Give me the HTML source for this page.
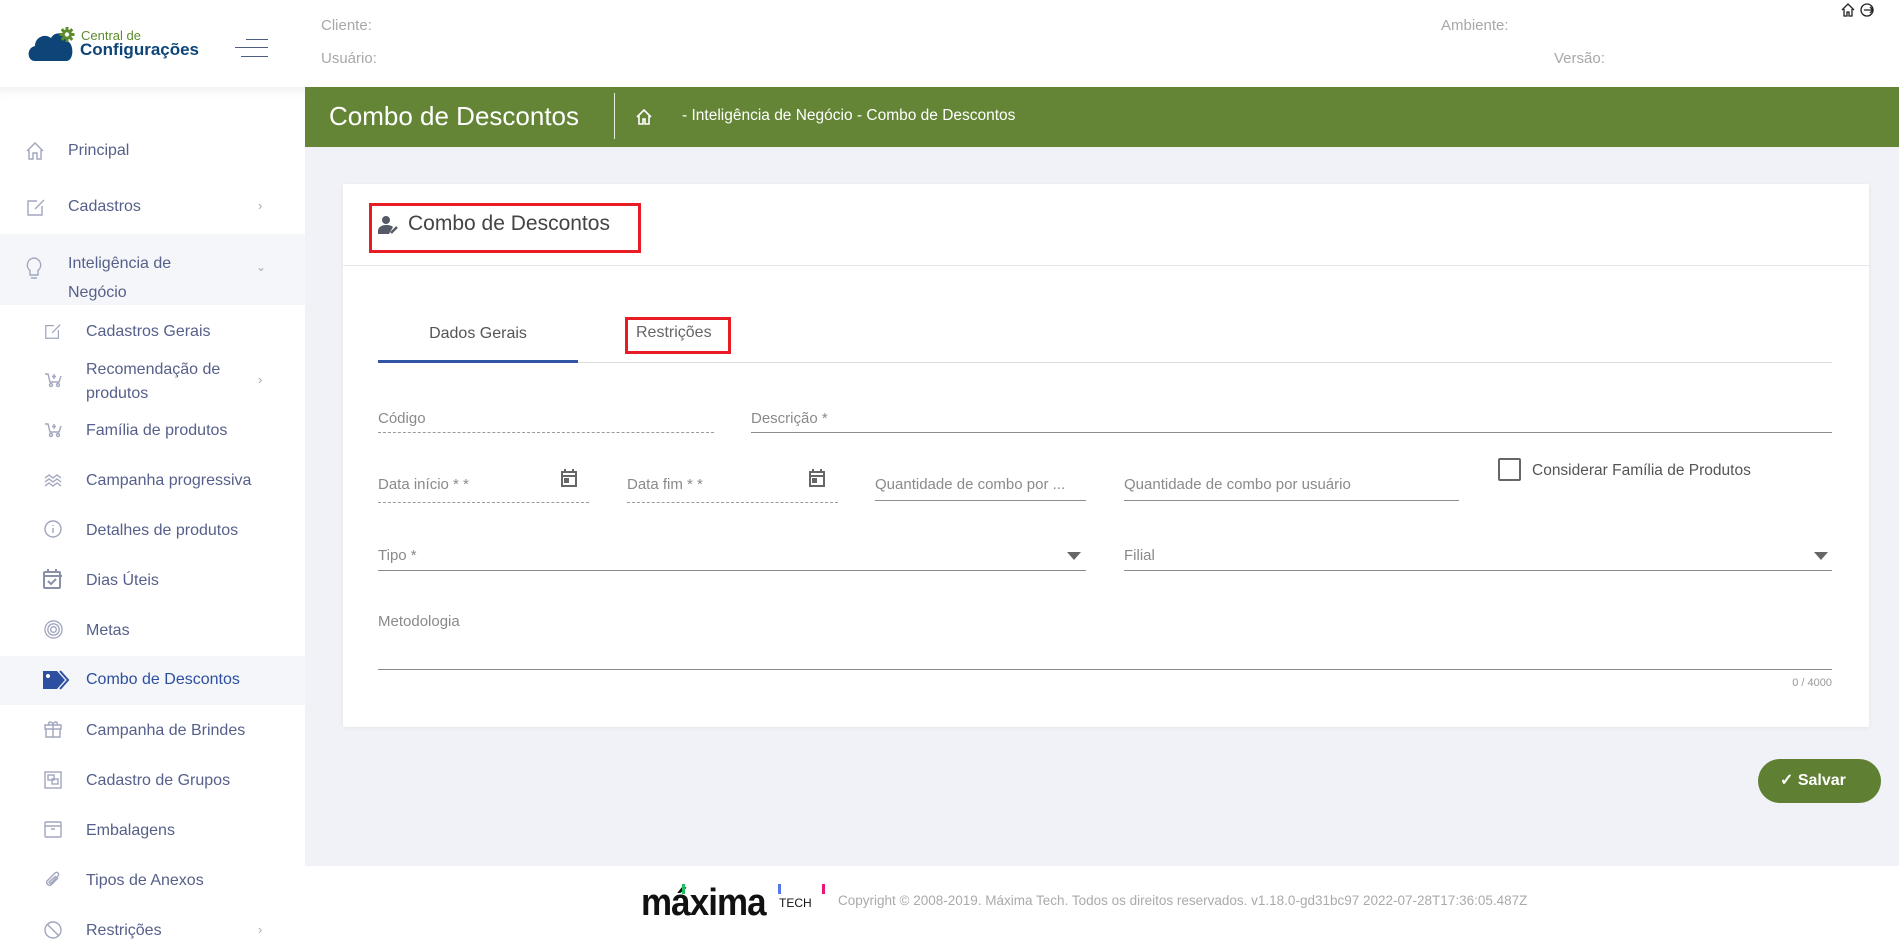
<!DOCTYPE html>
<html><head><meta charset="utf-8"><style>
*{margin:0;padding:0;box-sizing:border-box}
body{width:1899px;height:941px;overflow:hidden;background:#f0f2f7;font-family:"Liberation Sans",sans-serif;position:relative}
.a{position:absolute;white-space:nowrap}
.hdr{position:absolute;left:0;top:0;width:1899px;height:87px;background:#fff}
.side{position:absolute;left:0;top:87px;width:305px;height:854px;background:#fff;box-shadow:inset 0 12px 12px -10px rgba(0,0,0,.08)}
.si{position:absolute;font-size:16px;color:#56608a}
.ic{position:absolute;stroke:#a0a6be;fill:none;stroke-width:1.4}
.lbl{position:absolute;font-size:15px;color:#8a8a8a;white-space:nowrap}
.ln{position:absolute;height:0;border-bottom:1px solid #8c8c8c}
.dl{position:absolute;height:0;border-bottom:1px dashed #9a9a9a}
</style></head><body>
<div class="hdr"></div>
<!-- logo -->
<svg class="a" style="left:28px;top:26px" width="50" height="36" viewBox="0 0 50 36">
<path d="M7 35 C-1 35 -2 22 7 20 C7 11 17 7 23 12 C27 5 37 6 38 15 C46 15 47 35 38 35 Z" fill="#0e4579"/>
<g stroke="#5d8c2e" stroke-width="3"><path d="M39 1v15M31.5 8.5h15M33.7 3.2l10.6 10.6M44.3 3.2l-10.6 10.6"/></g>
<circle cx="39" cy="8.5" r="5" fill="#5d8c2e"/>
<circle cx="39" cy="8.5" r="2.2" fill="#fff"/>
</svg>
<div class="a" style="left:81px;top:28px;font-size:13px;color:#5d8c2e">Central de</div>
<div class="a" style="left:80px;top:40px;font-size:17px;font-weight:bold;color:#0e4579">Configurações</div>
<div class="a" style="left:246px;top:39px;width:22px;border-top:1.5px solid #4d5f80"></div>
<div class="a" style="left:235px;top:47px;width:33px;border-top:1.5px solid #4d5f80"></div>
<div class="a" style="left:241px;top:56px;width:27px;border-top:1.5px solid #4d5f80"></div>
<div class="a" style="left:321px;top:17px;font-size:15px;color:#a8a8a8">Cliente:</div>
<div class="a" style="left:321px;top:50px;font-size:15px;color:#a8a8a8">Usuário:</div>
<div class="a" style="left:1441px;top:17px;font-size:15px;color:#a8a8a8">Ambiente:</div>
<div class="a" style="left:1554px;top:50px;font-size:15px;color:#a8a8a8">Versão:</div>
<svg class="a" style="left:1840px;top:2px" width="38" height="16" viewBox="0 0 38 16" fill="none" stroke="#222" stroke-width="1.3">
<path d="M2 8 L8 2 L14 8 M4 7v7h3v-4h2v4h3V7"/><circle cx="27" cy="8" r="6"/><path d="M24 8h9M30 5l3 3-3 3"/></svg>

<!-- green bar -->
<div class="a" style="left:305px;top:87px;width:1594px;height:60px;background:#648535"></div>
<div class="a" style="left:329px;top:101px;font-size:26px;color:#fff">Combo de Descontos</div>
<div class="a" style="left:614px;top:93px;height:46px;border-left:1px solid #e8eedf"></div>
<svg class="a" style="left:635px;top:108px" width="18" height="18" viewBox="0 0 18 18" fill="none" stroke="#fff" stroke-width="1.6"><path d="M2 9 L9 2 L16 9 M4 8v8h4v-5h2v5h4V8"/></svg>
<div class="a" style="left:682px;top:107px;font-size:15.5px;color:#fff">- Inteligência de Negócio - Combo de Descontos</div>

<!-- footer -->
<div class="a" style="left:305px;top:866px;width:1594px;height:75px;background:#fff"></div>
<div class="a" style="left:641px;top:882px;font-size:38px;font-weight:bold;color:#111;letter-spacing:-1px;transform:scaleX(0.92);transform-origin:left">máxima</div>
<div class="a" style="left:779px;top:896px;font-size:12px;color:#111">TECH</div>
<div class="a" style="left:682px;top:884px;width:3px;height:10px;background:#1fbf5f"></div>
<div class="a" style="left:778px;top:884px;width:3px;height:10px;background:#5577ee"></div>
<div class="a" style="left:822px;top:884px;width:3px;height:10px;background:#e8187a"></div>
<div class="a" style="left:838px;top:893px;font-size:13.5px;color:#aaa">Copyright © 2008-2019. Máxima Tech. Todos os direitos reservados. v1.18.0-gd31bc97 2022-07-28T17:36:05.487Z</div>

<!-- sidebar -->
<div class="side"></div>
<div class="a" style="left:0;top:234px;width:305px;height:71px;background:#f5f6f9"></div>
<div class="a" style="left:0;top:656px;width:305px;height:49px;background:#f5f6f9"></div>
<svg class="ic" style="left:25px;top:141px" width="20" height="20" viewBox="0 0 20 20"><path d="M2 10 L10 2 L18 10 M4 9v9h4v-6h4v6h4V9"/></svg>
<div class="si" style="left:68px;top:142px">Principal</div>
<svg class="ic" style="left:26px;top:197px" width="20" height="20" viewBox="0 0 20 20"><path d="M11 4H2v14h14V9M9 12l9-9"/></svg>
<div class="si" style="left:68px;top:198px">Cadastros</div>
<div class="si" style="left:258px;top:198px;color:#aaa;font-size:13px">›</div>
<svg class="ic" style="left:24px;top:256px" width="20" height="26" viewBox="0 0 20 26"><path d="M10 2a7 7 0 0 0-4 12.5V19h8v-4.5A7 7 0 0 0 10 2zM7 22h6"/></svg>
<div class="si" style="left:68px;top:249px;line-height:29px">Inteligência de<br>Negócio</div>
<div class="si" style="left:256px;top:260px;color:#aaa;font-size:12px">⌄</div>
<svg class="ic" style="left:44px;top:322px" width="18" height="18" viewBox="0 0 20 20"><path d="M11 4H2v14h14V9M9 12l9-9"/></svg>
<div class="si" style="left:86px;top:323px">Cadastros Gerais</div>
<svg class="ic" style="left:44px;top:372px" width="18" height="16" viewBox="0 0 18 16"><path d="M1 2h3l2 8h9l2-6M10 2v5M8 4.5h4"/><circle cx="7" cy="13" r="1.5"/><circle cx="14" cy="13" r="1.5"/></svg>
<div class="si" style="left:86px;top:358px;line-height:24px">Recomendação de<br>produtos</div>
<div class="si" style="left:258px;top:372px;color:#aaa;font-size:13px">›</div>
<svg class="ic" style="left:44px;top:422px" width="18" height="16" viewBox="0 0 18 16"><path d="M1 2h3l2 8h9l2-6M10 2v5M8 4.5h4"/><circle cx="7" cy="13" r="1.5"/><circle cx="14" cy="13" r="1.5"/></svg>
<div class="si" style="left:86px;top:422px">Família de produtos</div>
<svg class="ic" style="left:44px;top:473px" width="18" height="14" viewBox="0 0 18 14"><path d="M1 5l4-3 4 3 4-3 4 3M1 9l4-3 4 3 4-3 4 3M1 13l4-3 4 3 4-3 4 3"/></svg>
<div class="si" style="left:86px;top:472px">Campanha progressiva</div>
<svg class="ic" style="left:44px;top:520px" width="18" height="18" viewBox="0 0 18 18"><circle cx="9" cy="9" r="8"/><path d="M9 8v5M9 5v1"/></svg>
<div class="si" style="left:86px;top:522px">Detalhes de produtos</div>
<svg class="a" style="left:42px;top:568px" width="20" height="21" viewBox="0 0 20 21" fill="none" stroke="#8a90a8" stroke-width="2"><rect x="2" y="4" width="16" height="16" rx="1"/><path d="M2 8h18M6 1v4M14 1v4M6 13l3 3 5-5"/></svg>
<div class="si" style="left:86px;top:572px">Dias Úteis</div>
<svg class="ic" style="left:44px;top:620px" width="19" height="19" viewBox="0 0 20 20"><circle cx="10" cy="10" r="9"/><circle cx="10" cy="10" r="6"/><circle cx="10" cy="10" r="3"/></svg>
<div class="si" style="left:86px;top:622px">Metas</div>
<svg class="a" style="left:41px;top:669px" width="30" height="22" viewBox="0 0 30 22"><path d="M2 2h14l8 9-8 9H2z" fill="#2d4fa0"/><path d="M19 2l8 9-8 9" fill="none" stroke="#2d4fa0" stroke-width="2"/><circle cx="7" cy="7" r="2" fill="#fff"/></svg>
<div class="si" style="left:86px;top:671px;color:#2d4fa0">Combo de Descontos</div>
<svg class="ic" style="left:44px;top:720px" width="18" height="18" viewBox="0 0 18 18"><path d="M1 5h16v4H1zM2 9h14v8H2zM9 5v12M5 5c-2-4 4-4 4 0 0-4 6-4 4 0"/></svg>
<div class="si" style="left:86px;top:722px">Campanha de Brindes</div>
<svg class="ic" style="left:44px;top:771px" width="18" height="18" viewBox="0 0 18 18"><rect x="1" y="1" width="16" height="16"/><rect x="4" y="4" width="6" height="5"/><rect x="8" y="8" width="6" height="5"/></svg>
<div class="si" style="left:86px;top:772px">Cadastro de Grupos</div>
<svg class="ic" style="left:44px;top:821px" width="18" height="17" viewBox="0 0 18 17"><rect x="1" y="1" width="16" height="15" rx="1"/><path d="M1 5h16M7 8h4"/></svg>
<div class="si" style="left:86px;top:822px">Embalagens</div>
<svg class="ic" style="left:44px;top:871px" width="18" height="18" viewBox="0 0 18 18"><path d="M14 7l-7 7a3 3 0 0 1-4-4l8-8a2 2 0 0 1 3 3l-7 7a1 1 0 0 1-1.5-1.5L12 5"/></svg>
<div class="si" style="left:86px;top:872px">Tipos de Anexos</div>
<svg class="ic" style="left:44px;top:921px" width="18" height="18" viewBox="0 0 18 18"><circle cx="9" cy="9" r="8"/><path d="M3 3l12 12"/></svg>
<div class="si" style="left:86px;top:922px">Restrições</div>
<div class="si" style="left:258px;top:922px;color:#aaa;font-size:13px">›</div>

<!-- card -->
<div class="a" style="left:343px;top:184px;width:1526px;height:543px;background:#fff;box-shadow:0 1px 4px rgba(0,0,0,.06)"></div>
<div class="a" style="left:343px;top:265px;width:1526px;border-top:1px solid #e8e8ec"></div>
<div class="a" style="left:369px;top:203px;width:272px;height:50px;border:3px solid #e81c24"></div>
<svg class="a" style="left:378px;top:215px" width="22" height="20" viewBox="0 0 22 20"><circle cx="8" cy="5" r="4" fill="#555a66"/><path d="M0 19v-3c0-4 4-6 8-6s6 1 7 2l-4 7z" fill="#555a66"/><path d="M13 18l6-6" stroke="#555a66" stroke-width="2.5"/></svg>
<div class="a" style="left:408px;top:212px;font-size:21px;color:#444">Combo de Descontos</div>

<div class="a" style="left:378px;top:325px;width:200px;text-align:center;font-size:16px;color:#555">Dados Gerais</div>
<div class="a" style="left:378px;top:362px;width:1454px;border-top:1px solid #ddd"></div>
<div class="a" style="left:378px;top:360px;width:200px;height:3px;background:#3353a5"></div>
<div class="a" style="left:625px;top:317px;width:106px;height:37px;border:3px solid #e81c24"></div>
<div class="a" style="left:636px;top:324px;font-size:16px;color:#666">Restrições</div>

<div class="lbl" style="left:378px;top:410px">Código</div><div class="dl" style="left:378px;top:432px;width:336px"></div>
<div class="lbl" style="left:751px;top:410px">Descrição *</div><div class="ln" style="left:751px;top:432px;width:1081px"></div>

<div class="lbl" style="left:378px;top:476px">Data início * *</div><div class="dl" style="left:378px;top:502px;width:211px"></div>
<svg class="a" style="left:560px;top:468px" width="18" height="20" viewBox="0 0 18 20" fill="none" stroke="#666" stroke-width="2"><rect x="2" y="4" width="14" height="14"/><path d="M2 8h14M5 1v4M13 1v4"/><rect x="5" y="11" width="3" height="3" fill="#666"/></svg>
<div class="lbl" style="left:627px;top:476px">Data fim * *</div><div class="dl" style="left:627px;top:502px;width:211px"></div>
<svg class="a" style="left:808px;top:468px" width="18" height="20" viewBox="0 0 18 20" fill="none" stroke="#666" stroke-width="2"><rect x="2" y="4" width="14" height="14"/><path d="M2 8h14M5 1v4M13 1v4"/><rect x="5" y="11" width="3" height="3" fill="#666"/></svg>
<div class="lbl" style="left:875px;top:476px">Quantidade de combo por ...</div><div class="ln" style="left:875px;top:500px;width:211px"></div>
<div class="lbl" style="left:1124px;top:476px">Quantidade de combo por usuário</div><div class="ln" style="left:1124px;top:500px;width:335px"></div>
<div class="a" style="left:1498px;top:458px;width:23px;height:23px;border:2px solid #666;border-radius:2px"></div>
<div class="a" style="left:1532px;top:462px;font-size:15.5px;color:#555">Considerar Família de Produtos</div>

<div class="lbl" style="left:378px;top:547px">Tipo *</div><div class="ln" style="left:378px;top:570px;width:708px"></div>
<svg class="a" style="left:1067px;top:552px" width="14" height="8" viewBox="0 0 14 8"><path d="M0 0h14L7 8z" fill="#666"/></svg>
<div class="lbl" style="left:1124px;top:547px">Filial</div><div class="ln" style="left:1124px;top:570px;width:708px"></div>
<svg class="a" style="left:1814px;top:552px" width="14" height="8" viewBox="0 0 14 8"><path d="M0 0h14L7 8z" fill="#666"/></svg>

<div class="lbl" style="left:378px;top:613px">Metodologia</div><div class="ln" style="left:378px;top:669px;width:1454px"></div>
<div class="a" style="left:1784px;top:677px;width:48px;text-align:right;font-size:11px;color:#999">0 / 4000</div>

<div class="a" style="left:1758px;top:759px;width:123px;height:44px;border-radius:22px;background:#5f7f32;color:#fff;font-size:16px;font-weight:bold;line-height:44px;padding-left:22px">✓ Salvar</div>
</body></html>
